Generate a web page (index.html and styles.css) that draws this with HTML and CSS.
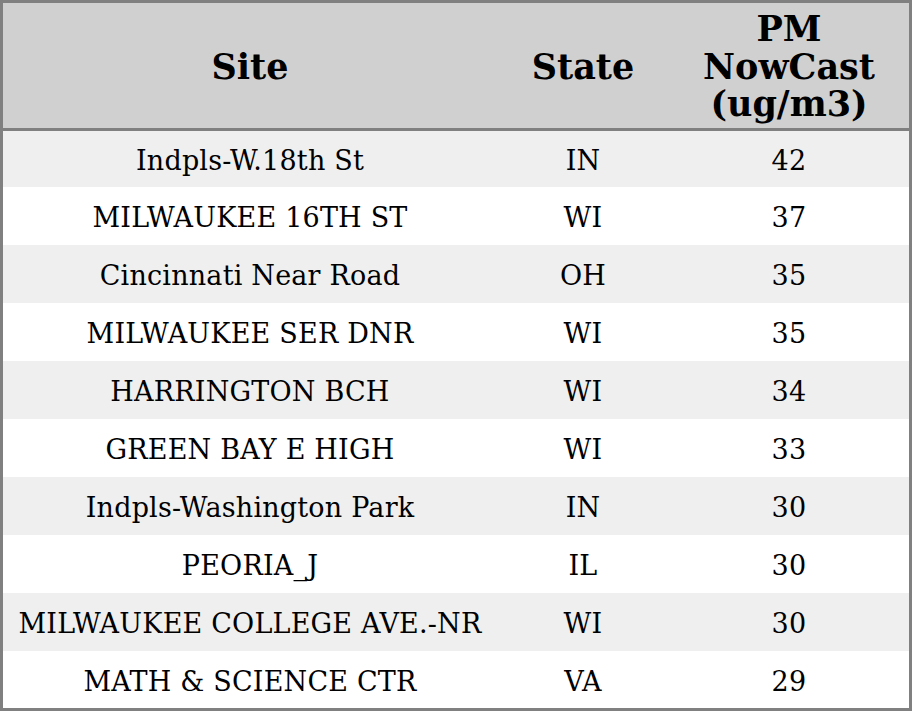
FILE: index.html
```html
<!DOCTYPE html>
<html>
<head>
<meta charset="utf-8">
<link rel="stylesheet" href="styles.css">
</head>
<body>
<table class="aq">
  <colgroup>
    <col class="c-site">
    <col class="c-state">
    <col class="c-pm">
  </colgroup>
  <thead>
    <tr class="head">
      <th>Site</th>
      <th>State</th>
      <th>PM<br>NowCast<br>(ug/m3)</th>
    </tr>
  </thead>
  <tbody>
    <tr class="first"><td>Indpls-W.18th St</td><td>IN</td><td>42</td></tr>
    <tr><td>MILWAUKEE 16TH ST</td><td>WI</td><td>37</td></tr>
    <tr><td>Cincinnati Near Road</td><td>OH</td><td>35</td></tr>
    <tr><td>MILWAUKEE SER DNR</td><td>WI</td><td>35</td></tr>
    <tr><td>HARRINGTON BCH</td><td>WI</td><td>34</td></tr>
    <tr><td>GREEN BAY E HIGH</td><td>WI</td><td>33</td></tr>
    <tr><td>Indpls-Washington Park</td><td>IN</td><td>30</td></tr>
    <tr><td>PEORIA_J</td><td>IL</td><td>30</td></tr>
    <tr><td>MILWAUKEE COLLEGE AVE.-NR</td><td>WI</td><td>30</td></tr>
    <tr class="last"><td>MATH &amp; SCIENCE CTR</td><td>VA</td><td>29</td></tr>
  </tbody>
</table>
</body>
</html>
```
FILE: styles.css
```css
html, body {
  margin: 0;
  padding: 0;
  background: #ffffff;
}
.aq {
  width: 912px;
  border-collapse: separate;
  border-spacing: 0;
  table-layout: fixed;
  border: 3px solid #808080;
  font-family: "DejaVu Serif", serif;
  color: #000;
}
.c-site { width: 494px; }
.c-state { width: 172px; }
.c-pm { width: auto; }
.aq th {
  background: #d0d0d0;
  font-size: 35px;
  font-weight: bold;
  line-height: 37.5px;
  padding: 2px 0 0 0;
  text-align: center;
  vertical-align: middle;
  border-bottom: 3px solid #808080;
}
.aq tr.head { height: 128px; }
.aq td {
  font-size: 27px;
  line-height: 30px;
  letter-spacing: 0.2px;
  padding: 4px 0 0 0;
  text-align: center;
  vertical-align: middle;
  white-space: nowrap;
}
.aq tbody tr { height: 58px; }
.aq tbody tr.first { height: 56px; }
.aq tbody tr.last { height: 57px; }
.aq tbody tr:nth-child(odd) { background: #efefef; }
.aq tbody tr:nth-child(even) { background: #ffffff; }
```
